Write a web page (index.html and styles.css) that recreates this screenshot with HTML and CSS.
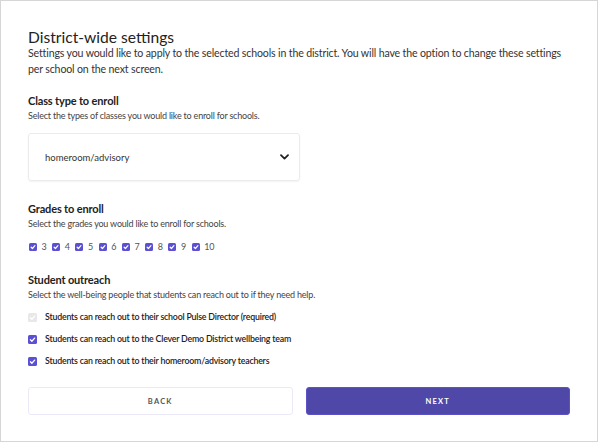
FILE: index.html
```html
<!DOCTYPE html>
<html>
<head>
<meta charset="utf-8">
<link rel="stylesheet" href="styles.css">
</head>
<body>
<div class="frame">
  <h1 class="title">District-wide settings</h1>
  <p class="lead">Settings you would like to apply to the selected schools in the district. You will have the option to change these settings per school on the next screen.</p>

  <section class="section s-class">
    <h2 class="heading">Class type to enroll</h2>
    <p class="desc">Select the types of classes you would like to enroll for schools.</p>
    <div class="select">
      <span class="select-text">homeroom/advisory</span>
      <svg class="chev" width="9" height="6" viewBox="0 0 9 6"><path d="M1 1.2 L4.5 4.6 L8 1.2" fill="none" stroke="#222" stroke-width="1.8" stroke-linecap="round" stroke-linejoin="round"/></svg>
    </div>
  </section>

  <section class="section s-grades">
    <h2 class="heading">Grades to enroll</h2>
    <p class="desc">Select the grades you would like to enroll for schools.</p>
    <div class="grades">
      <label class="grade"><span class="box on"><svg viewBox="0 0 10 10"><path d="M2.7 5.3 L4.3 6.9 L7.4 3.4" fill="none" stroke="#fff" stroke-width="1.5" stroke-linecap="round" stroke-linejoin="round"/></svg></span>3</label>
      <label class="grade"><span class="box on"><svg viewBox="0 0 10 10"><path d="M2.7 5.3 L4.3 6.9 L7.4 3.4" fill="none" stroke="#fff" stroke-width="1.5" stroke-linecap="round" stroke-linejoin="round"/></svg></span>4</label>
      <label class="grade"><span class="box on"><svg viewBox="0 0 10 10"><path d="M2.7 5.3 L4.3 6.9 L7.4 3.4" fill="none" stroke="#fff" stroke-width="1.5" stroke-linecap="round" stroke-linejoin="round"/></svg></span>5</label>
      <label class="grade"><span class="box on"><svg viewBox="0 0 10 10"><path d="M2.7 5.3 L4.3 6.9 L7.4 3.4" fill="none" stroke="#fff" stroke-width="1.5" stroke-linecap="round" stroke-linejoin="round"/></svg></span>6</label>
      <label class="grade"><span class="box on"><svg viewBox="0 0 10 10"><path d="M2.7 5.3 L4.3 6.9 L7.4 3.4" fill="none" stroke="#fff" stroke-width="1.5" stroke-linecap="round" stroke-linejoin="round"/></svg></span>7</label>
      <label class="grade"><span class="box on"><svg viewBox="0 0 10 10"><path d="M2.7 5.3 L4.3 6.9 L7.4 3.4" fill="none" stroke="#fff" stroke-width="1.5" stroke-linecap="round" stroke-linejoin="round"/></svg></span>8</label>
      <label class="grade"><span class="box on"><svg viewBox="0 0 10 10"><path d="M2.7 5.3 L4.3 6.9 L7.4 3.4" fill="none" stroke="#fff" stroke-width="1.5" stroke-linecap="round" stroke-linejoin="round"/></svg></span>9</label>
      <label class="grade"><span class="box on"><svg viewBox="0 0 10 10"><path d="M2.7 5.3 L4.3 6.9 L7.4 3.4" fill="none" stroke="#fff" stroke-width="1.5" stroke-linecap="round" stroke-linejoin="round"/></svg></span>10</label>
    </div>
  </section>

  <section class="section s-outreach">
    <h2 class="heading">Student outreach</h2>
    <p class="desc">Select the well-being people that students can reach out to if they need help.</p>
    <div class="options">
      <label class="option"><span class="box big off"><svg viewBox="0 0 10 10"><path d="M2.7 5.3 L4.3 6.9 L7.4 3.4" fill="none" stroke="#fff" stroke-width="1.4" stroke-linecap="round" stroke-linejoin="round"/></svg></span>Students can reach out to their school Pulse Director (required)</label>
      <label class="option"><span class="box big on"><svg viewBox="0 0 10 10"><path d="M2.7 5.3 L4.3 6.9 L7.4 3.4" fill="none" stroke="#fff" stroke-width="1.4" stroke-linecap="round" stroke-linejoin="round"/></svg></span>Students can reach out to the Clever Demo District wellbeing team</label>
      <label class="option"><span class="box big on"><svg viewBox="0 0 10 10"><path d="M2.7 5.3 L4.3 6.9 L7.4 3.4" fill="none" stroke="#fff" stroke-width="1.4" stroke-linecap="round" stroke-linejoin="round"/></svg></span>Students can reach out to their homeroom/advisory teachers</label>
    </div>
  </section>

  <div class="actions">
    <button class="btn btn-back">BACK</button>
    <button class="btn btn-next">NEXT</button>
  </div>
</div>
</body>
</html>
```

FILE: styles.css
```css
html, body {
  margin: 0;
  padding: 0;
  background: #fff;
}
body {
  font-family: Lato, "Noto Sans", sans-serif;
  color: #222;
}
.frame {
  box-sizing: border-box;
  width: 598px;
  height: 442px;
  border: 1px solid #d6d6d6;
  padding: 28px 27px 0 27px;
}
.title {
  margin: 0;
  font-size: 15.6px;
  font-weight: 400;
  line-height: 16px;
  color: #222;
}
.lead {
  margin: 0;
  font-size: 10.6px;
  line-height: 16px;
  letter-spacing: -0.15px;
  color: #333;
}
.section {
  margin-top: 17px;
}
.s-grades {
  margin-top: 21px;
}
.s-outreach {
  margin-top: 20px;
}
.heading {
  margin: 0;
  font-size: 11px;
  font-weight: 700;
  line-height: 14px;
  letter-spacing: -0.15px;
  color: #222;
}
.desc {
  margin: 2px 0 0;
  font-size: 9px;
  line-height: 12px;
  letter-spacing: -0.2px;
  color: #444;
}
.select {
  box-sizing: border-box;
  margin-top: 11px;
  width: 272px;
  height: 48px;
  border: 1px solid #ebebeb;
  border-radius: 3px;
  box-shadow: 0 1px 2px rgba(0,0,0,0.05);
  display: flex;
  align-items: center;
  justify-content: space-between;
  padding: 0 10px 0 16px;
}
.select-text {
  font-size: 9.5px;
  color: #333;
}
.chev {
  display: block;
}
.grades {
  display: flex;
  gap: 5.5px;
  margin-top: 11px;
  padding-left: 1px;
}
.grade {
  display: flex;
  align-items: center;
  gap: 4.5px;
  font-size: 9px;
  line-height: 12px;
  color: #555;
}
.box {
  width: 8px;
  height: 8px;
  border-radius: 1.5px;
  display: inline-flex;
  flex: none;
}
.box svg {
  width: 100%;
  height: 100%;
}
.box.big {
  width: 9px;
  height: 9px;
}
.box.on {
  background: #5c50d2;
}
.box.off {
  background: #e8e8e8;
}
.options {
  margin-top: 10px;
  display: flex;
  flex-direction: column;
  gap: 10px;
}
.option {
  display: flex;
  align-items: center;
  gap: 8px;
  font-size: 8.8px;
  line-height: 12px;
  font-weight: 600;
  letter-spacing: -0.2px;
  color: #222;
}
.actions {
  display: flex;
  gap: 13px;
  margin-top: 20px;
}
.btn {
  flex: 1;
  height: 28px;
  border-radius: 3px;
  font-family: Lato, "Noto Sans", sans-serif;
  font-size: 7.5px;
  font-weight: 700;
  letter-spacing: 1.2px;
  cursor: pointer;
}
.btn-back {
  background: #fff;
  border: 1px solid #ebe9f7;
  color: #555;
}
.btn-next {
  background: #4f48a8;
  border: 1px solid #5b52c4;
  color: #fff;
}
```
